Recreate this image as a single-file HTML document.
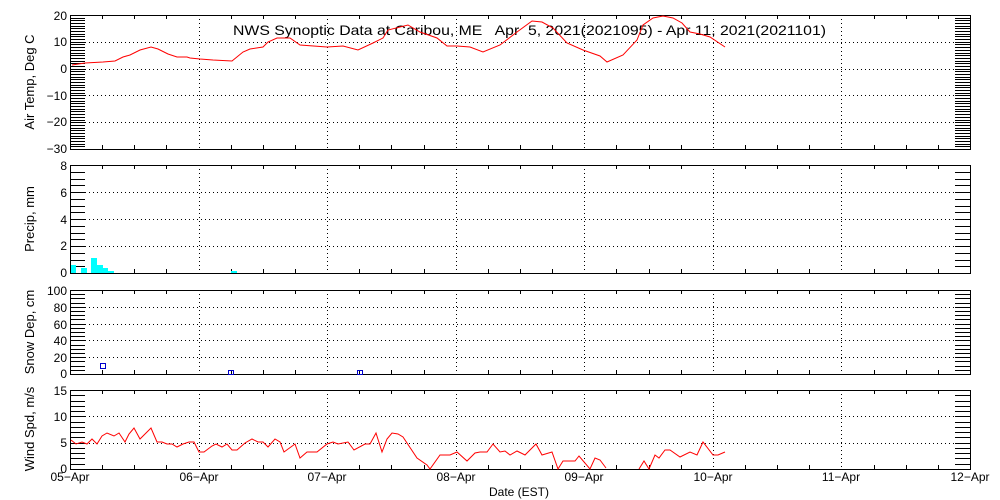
<!DOCTYPE html>
<html><head><meta charset="utf-8"><style>
html,body{margin:0;padding:0;background:#fff;}
svg{display:block;font-family:"Liberation Sans",sans-serif;}
</style></head><body>
<svg id="s" width="1000" height="500" viewBox="0 0 1000 500" xmlns="http://www.w3.org/2000/svg">
<g id="g" shape-rendering="crispEdges"></g>
<g font-size="12" fill="#000" text-anchor="end">
<text x="67" y="20">20</text><text x="67" y="46">10</text><text x="67" y="73">0</text><text x="67" y="100">−10</text><text x="67" y="126">−20</text><text x="67" y="153">−30</text>
<text x="67" y="170">8</text><text x="67" y="197">6</text><text x="67" y="224">4</text><text x="67" y="250">2</text><text x="67" y="277">0</text>
<text x="67" y="295">100</text><text x="67" y="312">80</text><text x="67" y="329">60</text><text x="67" y="345">40</text><text x="67" y="362">20</text><text x="67" y="378">0</text>
<text x="67" y="395">15</text><text x="67" y="421">10</text><text x="67" y="447">5</text><text x="67" y="473">0</text>
</g>
<g font-size="12" fill="#000" text-anchor="middle">
<text x="70" y="481">05−Apr</text><text x="199" y="481">06−Apr</text><text x="327" y="481">07−Apr</text><text x="456" y="481">08−Apr</text><text x="584" y="481">09−Apr</text><text x="713" y="481">10−Apr</text><text x="841" y="481">11−Apr</text><text x="970" y="481">12−Apr</text>
<text x="519" y="496">Date (EST)</text>
</g>
<g font-size="13" fill="#000" text-anchor="middle">
<text transform="translate(34,82) rotate(-90)">Air Temp, Deg C</text>
<text transform="translate(34,219) rotate(-90)">Precip, mm</text>
<text transform="translate(34,332) rotate(-90)">Snow Dep, cm</text>
<text transform="translate(34,429) rotate(-90)">Wind Spd, m/s</text>
</g>
<text x="233" y="35" font-size="14" textLength="593" lengthAdjust="spacingAndGlyphs" xml:space="preserve">NWS Synoptic Data at Caribou, ME   Apr  5, 2021(2021095) - Apr 11, 2021(2021101)</text>
<g fill="#00ffff" shape-rendering="crispEdges">
<rect x="71" y="265" width="5" height="8"/><rect x="81" y="268" width="6" height="5"/><rect x="91" y="258" width="6" height="15"/><rect x="97" y="265" width="6" height="8"/><rect x="103" y="268" width="5" height="5"/><rect x="108" y="271" width="6" height="2"/><rect x="231" y="271" width="6" height="2"/>
</g>
<g fill="none" stroke="#0000cc" stroke-width="1" shape-rendering="crispEdges">
<rect x="100.5" y="363.5" width="5" height="5"/><rect x="228.5" y="370.5" width="5" height="4"/><rect x="357.5" y="370.5" width="5" height="4"/>
</g>
<polyline fill="none" stroke="#ff0000" stroke-width="1" points="72,65 85,63 103,62 115,61 123,57 130,55 140,50 151,47 158,49 168,54 177,57 187,57 190,58 200,59 213,60 232,61 243,52 250,49 263,47 268,42 277,38 290,38 300,45 327,47 343,46 358,50 373,43 383,38 388,30 408,25 420,32 437,38 447,46 457,46 470,47 483,52 500,45 517,32 532,21 542,22 553,28 567,43 583,50 600,56 607,62 623,55 637,40 643,25 653,18 663,16 673,18 682,23 690,32 700,34 710,37 725,47"/>
<polyline fill="none" stroke="#ff0000" stroke-width="1" points="71,440 76,444 82,442 87,444 92,439 97,444 102,436 107,433 114,436 119,433 125,442 129,434 134,428 140,439 151,428 157,442 162,442 167,444 172,444 177,447 183,444 189,442 194,442 199,452 204,452 212,446 216,444 222,447 227,444 232,450 237,450 245,443 252,439 258,442 263,442 268,447 275,439 280,442 284,452 295,444 300,458 307,452 317,452 327,444 333,442 338,444 348,442 354,450 365,444 370,444 376,433 382,452 387,439 392,433 398,434 403,437 417,458 427,465 430,469 440,455 450,455 457,452 467,461 475,453 480,452 487,452 493,444 500,452 505,451 510,455 517,451 525,455 536,444 542,455 552,452 558,469 563,461 575,461 579,456 590,469 595,458 600,460 606,468"/>
<polyline fill="none" stroke="#ff0000" stroke-width="1" points="639,469 644,461 649,469 655,455 659,458 665,450 670,450 680,457 690,452 697,455 703,442 713,455 718,455 725,452"/>
</svg>
<script>
(function(){
var g=document.getElementById('g'),ns='http://www.w3.org/2000/svg',h='';
function L(x1,y1,x2,y2,d){h+='<line x1="'+x1+'" y1="'+y1+'" x2="'+x2+'" y2="'+y2+'" stroke="#000" stroke-width="1"'+(d?' stroke-dasharray="1,3"':'')+'/>';}
var X0=70,X1=970,day=900/7;
var P=[[15,149,50,1,10],[165,273,8,0.5,2],[290,374,100,5,20],[390,469,15,1,5]];
P.forEach(function(p){
 var t=p[0],b=p[1],r=p[2],mi=p[3],ma=p[4];
 for(var v=0;v<=r+1e-6;v+=mi){var y=Math.round(b-(b-t)*v/r)+0.5;L(X0,y,X0+15,y);L(X1-15,y,X1,y);}
 for(var v=ma;v<r-1e-6;v+=ma){var y=Math.round(b-(b-t)*v/r)+0.5;L(X0+15,y,X1-15,y,1);}
 for(var i=1;i<28;i++){var x=Math.round(X0+i*day/4)+0.5;if(i%4==0){L(x,t,x,b,1);}else{L(x,t,x,t+4);L(x,b-4,x,b);}}
 h+='<rect x="70.5" y="'+(t+0.5)+'" width="900" height="'+(b-t)+'" fill="none" stroke="#000"/>';
});
g.innerHTML=h;
})();
</script>
</body></html>
